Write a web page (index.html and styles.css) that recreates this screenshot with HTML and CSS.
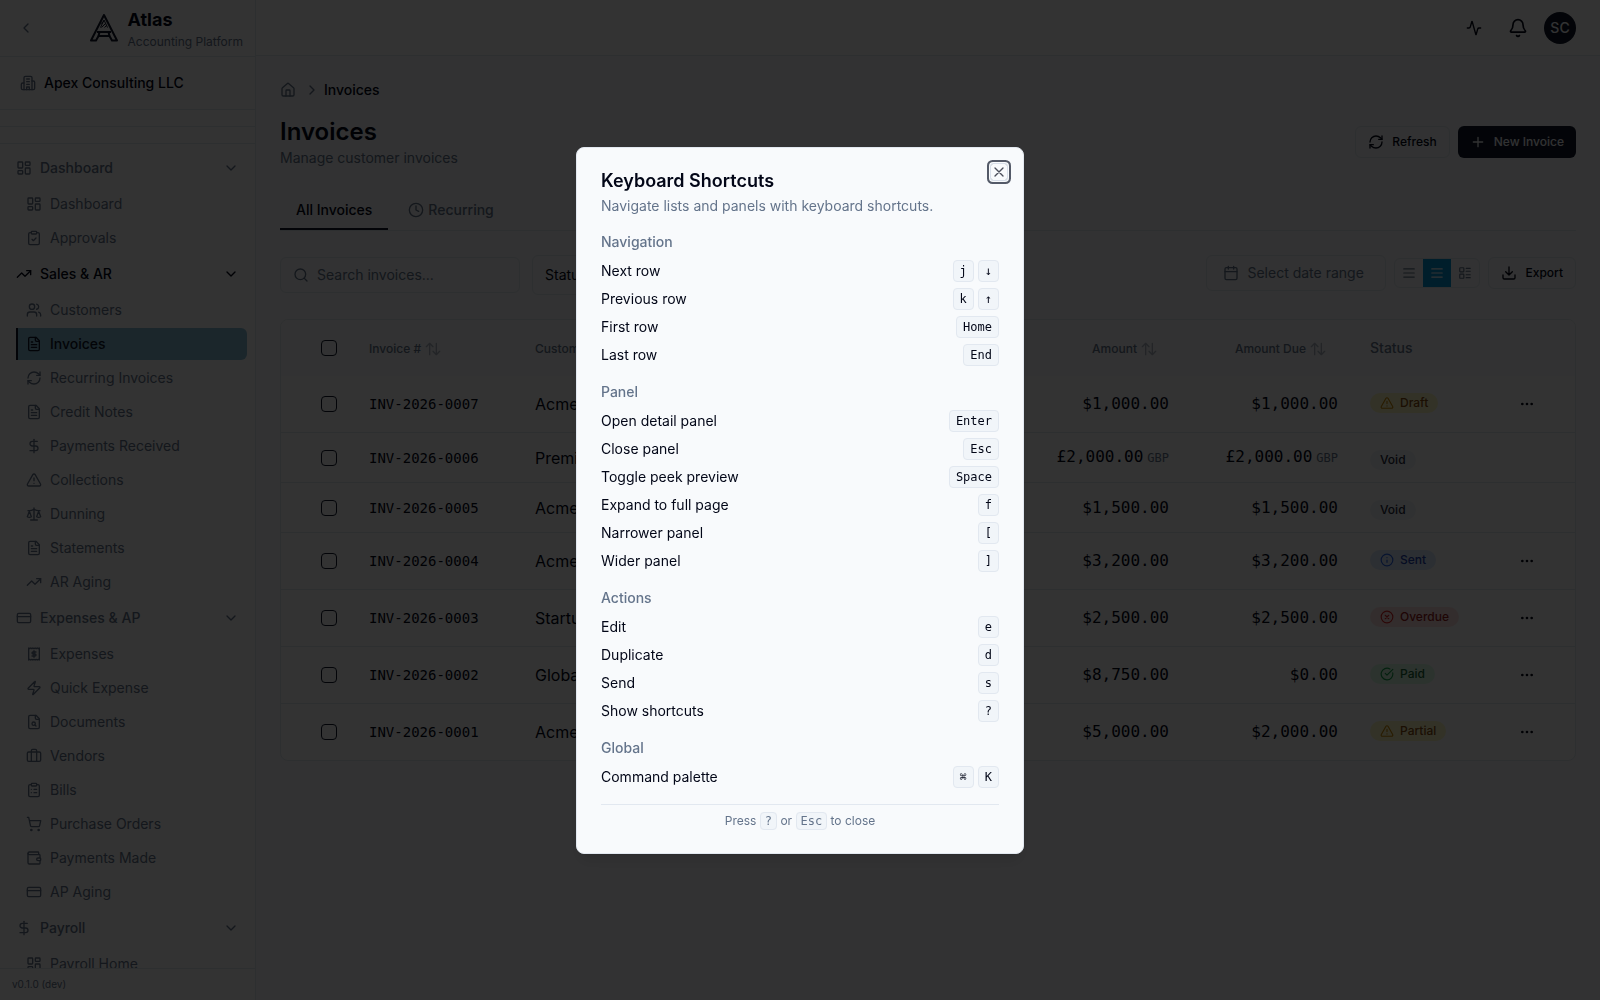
FILE: index.html
```html
<!DOCTYPE html>
<html lang="en">
<head>
<meta charset="utf-8">
<meta name="viewport" content="width=device-width, initial-scale=1">
<title>Invoices – Atlas</title>
<link rel="stylesheet" href="styles.css">
</head>
<body>
<svg class="sprite" aria-hidden="true">
  <symbol id="i-left" viewBox="0 0 24 24"><path d="m15 18-6-6 6-6"/></symbol>
  <symbol id="i-right" viewBox="0 0 24 24"><path d="m9 18 6-6-6-6"/></symbol>
  <symbol id="i-down" viewBox="0 0 24 24"><path d="m6 9 6 6 6-6"/></symbol>
  <symbol id="i-building" viewBox="0 0 24 24"><path d="M6 22V4a2 2 0 0 1 2-2h8a2 2 0 0 1 2 2v18Z"/><path d="M6 12H4a2 2 0 0 0-2 2v6a2 2 0 0 0 2 2h2"/><path d="M18 9h2a2 2 0 0 1 2 2v9a2 2 0 0 1-2 2h-2"/><path d="M10 6h4M10 10h4M10 14h4M10 22v-4h4v4"/></symbol>
  <symbol id="i-dash" viewBox="0 0 24 24"><rect width="7" height="9" x="3" y="3" rx="1"/><rect width="7" height="5" x="14" y="3" rx="1"/><rect width="7" height="9" x="14" y="12" rx="1"/><rect width="7" height="5" x="3" y="16" rx="1"/></symbol>
  <symbol id="i-clipcheck" viewBox="0 0 24 24"><rect width="8" height="4" x="8" y="2" rx="1"/><path d="M16 4h2a2 2 0 0 1 2 2v14a2 2 0 0 1-2 2H6a2 2 0 0 1-2-2V6a2 2 0 0 1 2-2h2"/><path d="m9 14 2 2 4-4"/></symbol>
  <symbol id="i-trend" viewBox="0 0 24 24"><path d="M22 7 13.5 15.500 8.500 10.500 2 17"/><path d="M16 7h6v6"/></symbol>
  <symbol id="i-users" viewBox="0 0 24 24"><path d="M16 21v-2a4 4 0 0 0-4-4H6a4 4 0 0 0-4 4v2"/><circle cx="9" cy="7" r="4"/><path d="M22 21v-2a4 4 0 0 0-3-3.870"/><path d="M16 3.130a4 4 0 0 1 0 7.750"/></symbol>
  <symbol id="i-file" viewBox="0 0 24 24"><path d="M15 2H6a2 2 0 0 0-2 2v16a2 2 0 0 0 2 2h12a2 2 0 0 0 2-2V7Z"/><path d="M14 2v4a2 2 0 0 0 2 2h4"/><path d="M10 9H8M16 13H8M16 17H8"/></symbol>
  <symbol id="i-refresh" viewBox="0 0 24 24"><path d="M3 12a9 9 0 0 1 9-9 9.750 9.750 0 0 1 6.740 2.740L21 8"/><path d="M21 3v5h-5"/><path d="M21 12a9 9 0 0 1-9 9 9.750 9.750 0 0 1-6.740-2.740L3 16"/><path d="M8 16H3v5"/></symbol>
  <symbol id="i-dollar" viewBox="0 0 24 24"><path d="M12 2v20"/><path d="M17 5H9.500a3.500 3.500 0 0 0 0 7h5a3.500 3.500 0 0 1 0 7H6"/></symbol>
  <symbol id="i-alert" viewBox="0 0 24 24"><path d="m21.730 18-8-14a2 2 0 0 0-3.480 0l-8 14A2 2 0 0 0 4 21h16a2 2 0 0 0 1.730-3"/><path d="M12 9v4M12 17h.01"/></symbol>
  <symbol id="i-scale" viewBox="0 0 24 24"><path d="m16 16 3-8 3 8c-.87.65-1.920 1-3 1s-2.130-.35-3-1Z"/><path d="m2 16 3-8 3 8c-.87.65-1.920 1-3 1s-2.130-.35-3-1Z"/><path d="M7 21h10M12 3v18"/><path d="M3 7h2c2 0 5-1 7-2 2 1 5 2 7 2h2"/></symbol>
  <symbol id="i-card" viewBox="0 0 24 24"><rect width="20" height="14" x="2" y="5" rx="2"/><path d="M2 10h20"/></symbol>
  <symbol id="i-receipt" viewBox="0 0 24 24"><path d="M4 3v18l1.500-1 1.500 1 1.700-1 1.600 1 1.700-1 1.700 1 1.600-1 1.700 1 1.500-1 1.500 1V3l-1.500 1L17 3l-1.700 1-1.600-1L12 4l-1.700-1-1.600 1L7 3 5.500 4Z"/><path d="M15 9h-4.500a1.500 1.500 0 0 0 0 3h3a1.500 1.500 0 0 1 0 3H9M12 7v10"/></symbol>
  <symbol id="i-zap" viewBox="0 0 24 24"><path d="M4 14a1 1 0 0 1-.78-1.630l9.900-10.200a.5.5 0 0 1 .86.460l-1.920 6.020A1 1 0 0 0 13 10h7a1 1 0 0 1 .78 1.630l-9.900 10.200a.5.5 0 0 1-.86-.46l1.920-6.020A1 1 0 0 0 11 14z"/></symbol>
  <symbol id="i-filesearch" viewBox="0 0 24 24"><path d="M15 2H6a2 2 0 0 0-2 2v16a2 2 0 0 0 2 2h12a2 2 0 0 0 2-2V7Z"/><path d="M14 2v4a2 2 0 0 0 2 2h4"/><circle cx="11.500" cy="14.500" r="2.500"/><path d="M13.300 16.300 15 18"/></symbol>
  <symbol id="i-case" viewBox="0 0 24 24"><rect width="20" height="14" x="2" y="6" rx="2"/><path d="M16 20V4a2 2 0 0 0-2-2h-4a2 2 0 0 0-2 2v16"/></symbol>
  <symbol id="i-cliplist" viewBox="0 0 24 24"><rect width="8" height="4" x="8" y="2" rx="1"/><path d="M16 4h2a2 2 0 0 1 2 2v14a2 2 0 0 1-2 2H6a2 2 0 0 1-2-2V6a2 2 0 0 1 2-2h2"/><path d="M12 11h4M12 16h4M8 11h.01M8 16h.01"/></symbol>
  <symbol id="i-cart" viewBox="0 0 24 24"><circle cx="8" cy="21" r="1"/><circle cx="19" cy="21" r="1"/><path d="M2.050 2.050h2l2.660 12.420a2 2 0 0 0 2 1.580h9.780a2 2 0 0 0 1.950-1.570l1.650-7.430H5.120"/></symbol>
  <symbol id="i-wallet" viewBox="0 0 24 24"><path d="M19 7V4a1 1 0 0 0-1-1H5a2 2 0 0 0 0 4h15a1 1 0 0 1 1 1v4h-3a2 2 0 0 0 0 4h3a1 1 0 0 0 1-1v-2a1 1 0 0 0-1-1"/><path d="M3 5v14a2 2 0 0 0 2 2h15a1 1 0 0 0 1-1v-4"/></symbol>
  <symbol id="i-home" viewBox="0 0 24 24"><path d="M15 21v-8a1 1 0 0 0-1-1h-4a1 1 0 0 0-1 1v8"/><path d="M3 10a2 2 0 0 1 .71-1.530l7-6a2 2 0 0 1 2.580 0l7 6A2 2 0 0 1 21 10v9a2 2 0 0 1-2 2H5a2 2 0 0 1-2-2z"/></symbol>
  <symbol id="i-clock" viewBox="0 0 24 24"><circle cx="12" cy="12" r="10"/><path d="M12 6v6l4 2"/></symbol>
  <symbol id="i-search" viewBox="0 0 24 24"><circle cx="11" cy="11" r="8"/><path d="m21 21-4.300-4.300"/></symbol>
  <symbol id="i-sort" viewBox="0 0 24 24"><path d="M2 8.500 7 3.500l5 5M7 3.500v17M22 15.500l-5 5-5-5M17 20.500v-17"/></symbol>
  <symbol id="i-plus" viewBox="0 0 24 24"><path d="M5 12h14M12 5v14"/></symbol>
  <symbol id="i-calendar" viewBox="0 0 24 24"><path d="M8 2v4M16 2v4"/><rect width="18" height="18" x="3" y="4" rx="2"/><path d="M3 10h18"/></symbol>
  <symbol id="i-rows" viewBox="0 0 24 24"><path d="M3 5h18M3 12h18M3 19h18"/></symbol>
  <symbol id="i-layout" viewBox="0 0 24 24"><rect width="7" height="7" x="3" y="3" rx="1"/><rect width="7" height="7" x="3" y="14" rx="1"/><path d="M14 4h7M14 9h7M14 15h7M14 20h7"/></symbol>
  <symbol id="i-download" viewBox="0 0 24 24"><path d="M21 15v4a2 2 0 0 1-2 2H5a2 2 0 0 1-2-2v-4"/><path d="m7 10 5 5 5-5M12 15V3"/></symbol>
  <symbol id="i-activity" viewBox="0 0 24 24"><path d="M22 12h-2.480a2 2 0 0 0-1.930 1.460l-2.350 8.360a.25.25 0 0 1-.48 0L9.240 2.180a.25.25 0 0 0-.48 0l-2.350 8.360A2 2 0 0 1 4.490 12H2"/></symbol>
  <symbol id="i-bell" viewBox="0 0 24 24"><path d="M10.270 21a2 2 0 0 0 3.460 0"/><path d="M3.260 15.330A1 1 0 0 0 4 17h16a1 1 0 0 0 .74-1.670C19.410 13.960 18 12.500 18 8A6 6 0 0 0 6 8c0 4.500-1.410 5.960-2.740 7.330"/></symbol>
  <symbol id="i-dots" viewBox="0 0 24 24"><circle cx="12" cy="12" r="1"/><circle cx="19" cy="12" r="1"/><circle cx="5" cy="12" r="1"/></symbol>
  <symbol id="i-info" viewBox="0 0 24 24"><circle cx="12" cy="12" r="10"/><path d="M12 16v-4M12 8h.01"/></symbol>
  <symbol id="i-xcircle" viewBox="0 0 24 24"><circle cx="12" cy="12" r="10"/><path d="m15 9-6 6M9 9l6 6"/></symbol>
  <symbol id="i-checkcircle" viewBox="0 0 24 24"><path d="M21.800 10A10 10 0 1 1 17 3.340"/><path d="m9 11 3 3L22 4"/></symbol>
  <symbol id="i-x" viewBox="0 0 24 24"><path d="M18 6 6 18M6 6l12 12"/></symbol>
</svg>

<div class="app">
  <aside class="sidebar">
    <div class="brand-row">
      <button class="icon-button" aria-label="Collapse sidebar"><svg class="icon"><use href="#i-left"/></svg></button>
      <a class="brand" href="#">
        <svg class="logo" viewBox="0 0 32 32" aria-hidden="true">
          <path d="M16 3 3 28.500h5L10.500 24h11L24 28.500h5Z"/><path d="M9 20h14M11.500 20 10.500 24M20.500 20l1 4"/><path class="hatch" d="M12.500 15.500 16 8l3.500 7.500M12.500 12l3.500-3M13.500 15.500l4-4M16.500 15.500l2-2"/>
        </svg>
        <span class="brand-text"><strong>Atlas</strong><small>Accounting Platform</small></span>
      </a>
    </div>
    <div class="company"><svg class="icon"><use href="#i-building"/></svg><span>Apex Consulting LLC</span></div>
    <div class="strip"></div>
    <div class="strip"></div>
    <nav class="nav" aria-label="Main">
      <button class="group"><svg class="icon"><use href="#i-dash"/></svg><span>Dashboard</span><svg class="icon"><use href="#i-down"/></svg></button>
      <a class="item" href="#"><svg class="icon"><use href="#i-dash"/></svg>Dashboard</a>
      <a class="item" href="#"><svg class="icon"><use href="#i-clipcheck"/></svg>Approvals</a>
      <button class="group current"><svg class="icon"><use href="#i-trend"/></svg><span>Sales &amp; AR</span><svg class="icon"><use href="#i-down"/></svg></button>
      <a class="item" href="#"><svg class="icon"><use href="#i-users"/></svg>Customers</a>
      <a class="item active" href="#" aria-current="page"><svg class="icon"><use href="#i-file"/></svg>Invoices</a>
      <a class="item" href="#"><svg class="icon"><use href="#i-refresh"/></svg>Recurring Invoices</a>
      <a class="item" href="#"><svg class="icon"><use href="#i-file"/></svg>Credit Notes</a>
      <a class="item" href="#"><svg class="icon"><use href="#i-dollar"/></svg>Payments Received</a>
      <a class="item" href="#"><svg class="icon"><use href="#i-alert"/></svg>Collections</a>
      <a class="item" href="#"><svg class="icon"><use href="#i-scale"/></svg>Dunning</a>
      <a class="item" href="#"><svg class="icon"><use href="#i-file"/></svg>Statements</a>
      <a class="item" href="#"><svg class="icon"><use href="#i-trend"/></svg>AR Aging</a>
      <button class="group"><svg class="icon"><use href="#i-card"/></svg><span>Expenses &amp; AP</span><svg class="icon"><use href="#i-down"/></svg></button>
      <a class="item" href="#"><svg class="icon"><use href="#i-receipt"/></svg>Expenses</a>
      <a class="item" href="#"><svg class="icon"><use href="#i-zap"/></svg>Quick Expense</a>
      <a class="item" href="#"><svg class="icon"><use href="#i-filesearch"/></svg>Documents</a>
      <a class="item" href="#"><svg class="icon"><use href="#i-case"/></svg>Vendors</a>
      <a class="item" href="#"><svg class="icon"><use href="#i-cliplist"/></svg>Bills</a>
      <a class="item" href="#"><svg class="icon"><use href="#i-cart"/></svg>Purchase Orders</a>
      <a class="item" href="#"><svg class="icon"><use href="#i-wallet"/></svg>Payments Made</a>
      <a class="item" href="#"><svg class="icon"><use href="#i-card"/></svg>AP Aging</a>
      <button class="group"><svg class="icon"><use href="#i-dollar"/></svg><span>Payroll</span><svg class="icon"><use href="#i-down"/></svg></button>
      <a class="item" href="#"><svg class="icon"><use href="#i-dash"/></svg>Payroll Home</a>
    </nav>
    <div class="version">v0.1.0 (dev)</div>
  </aside>

  <div class="main">
    <header class="topbar">
      <button class="icon-button" aria-label="Activity"><svg class="icon"><use href="#i-activity"/></svg></button>
      <button class="icon-button" aria-label="Notifications"><svg class="icon large"><use href="#i-bell"/></svg></button>
      <button class="avatar" aria-label="Account">SC</button>
    </header>
    <main class="content">
      <nav class="crumbs" aria-label="Breadcrumb">
        <a href="#" aria-label="Home"><svg class="icon"><use href="#i-home"/></svg></a>
        <svg class="icon"><use href="#i-right"/></svg>
        <span>Invoices</span>
      </nav>
      <div class="page-head">
        <div>
          <h1>Invoices</h1>
          <p>Manage customer invoices</p>
        </div>
        <div class="actions">
          <button class="btn"><svg class="icon"><use href="#i-refresh"/></svg>Refresh</button>
          <button class="btn primary"><svg class="icon"><use href="#i-plus"/></svg>New Invoice</button>
        </div>
      </div>
      <div class="tabs" role="tablist">
        <button class="tab selected" role="tab" aria-selected="true">All Invoices</button>
        <button class="tab" role="tab" aria-selected="false"><svg class="icon"><use href="#i-clock"/></svg>Recurring</button>
      </div>
      <div class="filters">
        <label class="search"><svg class="icon"><use href="#i-search"/></svg><input type="text" placeholder="Search invoices..." aria-label="Search invoices"></label>
        <select class="status-select" aria-label="Status"><option>Status</option></select>
        <div class="tools">
          <button class="date"><svg class="icon"><use href="#i-calendar"/></svg>Select date range</button>
          <div class="density">
            <button aria-label="Compact rows"><svg class="icon small"><use href="#i-rows"/></svg></button>
            <button class="on" aria-label="Normal rows"><svg class="icon small"><use href="#i-rows"/></svg></button>
            <button aria-label="Detailed rows"><svg class="icon small"><use href="#i-layout"/></svg></button>
          </div>
          <button class="btn"><svg class="icon"><use href="#i-download"/></svg>Export</button>
        </div>
      </div>
      <div class="table-card">
        <table>
          <colgroup><col class="c-check"><col class="c-num"><col><col class="c-amount"><col class="c-amount"><col class="c-status"><col class="c-menu"></colgroup>
          <thead>
            <tr>
              <th class="check"><input type="checkbox" aria-label="Select all"></th>
              <th><button class="sort">Invoice #<svg class="icon"><use href="#i-sort"/></svg></button></th>
              <th><button class="sort">Customer<svg class="icon"><use href="#i-sort"/></svg></button></th>
              <th class="right"><button class="sort">Amount<svg class="icon"><use href="#i-sort"/></svg></button></th>
              <th class="right"><button class="sort">Amount Due<svg class="icon"><use href="#i-sort"/></svg></button></th>
              <th>Status</th>
              <th></th>
            </tr>
          </thead>
          <tbody>
            <tr><td class="check"><input type="checkbox" aria-label="Select INV-2026-0007"></td><td class="num">INV-2026-0007</td><td>Acme Corp</td><td class="money">$1,000.00</td><td class="money">$1,000.00</td><td><span class="badge yellow"><svg class="icon small"><use href="#i-alert"/></svg>Draft</span></td><td><button class="more" aria-label="Row actions"><svg class="icon"><use href="#i-dots"/></svg></button></td></tr>
            <tr class="short"><td class="check"><input type="checkbox" aria-label="Select INV-2026-0006"></td><td class="num">INV-2026-0006</td><td>Premium Ltd</td><td class="money">£2,000.00<small>GBP</small></td><td class="money">£2,000.00<small>GBP</small></td><td><span class="badge">Void</span></td><td></td></tr>
            <tr class="short"><td class="check"><input type="checkbox" aria-label="Select INV-2026-0005"></td><td class="num">INV-2026-0005</td><td>Acme Corp</td><td class="money">$1,500.00</td><td class="money">$1,500.00</td><td><span class="badge">Void</span></td><td></td></tr>
            <tr><td class="check"><input type="checkbox" aria-label="Select INV-2026-0004"></td><td class="num">INV-2026-0004</td><td>Acme Corp</td><td class="money">$3,200.00</td><td class="money">$3,200.00</td><td><span class="badge blue"><svg class="icon small"><use href="#i-info"/></svg>Sent</span></td><td><button class="more" aria-label="Row actions"><svg class="icon"><use href="#i-dots"/></svg></button></td></tr>
            <tr><td class="check"><input type="checkbox" aria-label="Select INV-2026-0003"></td><td class="num">INV-2026-0003</td><td>Startup Inc</td><td class="money">$2,500.00</td><td class="money">$2,500.00</td><td><span class="badge red"><svg class="icon small"><use href="#i-xcircle"/></svg>Overdue</span></td><td><button class="more" aria-label="Row actions"><svg class="icon"><use href="#i-dots"/></svg></button></td></tr>
            <tr><td class="check"><input type="checkbox" aria-label="Select INV-2026-0002"></td><td class="num">INV-2026-0002</td><td>Global Inc</td><td class="money">$8,750.00</td><td class="money">$0.00</td><td><span class="badge green"><svg class="icon small"><use href="#i-checkcircle"/></svg>Paid</span></td><td><button class="more" aria-label="Row actions"><svg class="icon"><use href="#i-dots"/></svg></button></td></tr>
            <tr><td class="check"><input type="checkbox" aria-label="Select INV-2026-0001"></td><td class="num">INV-2026-0001</td><td>Acme Corp</td><td class="money">$5,000.00</td><td class="money">$2,000.00</td><td><span class="badge yellow"><svg class="icon small"><use href="#i-alert"/></svg>Partial</span></td><td><button class="more" aria-label="Row actions"><svg class="icon"><use href="#i-dots"/></svg></button></td></tr>
          </tbody>
        </table>
      </div>
    </main>
  </div>
</div>

<div class="overlay">
  <section class="dialog" role="dialog" aria-modal="true" aria-labelledby="dialog-title">
    <button class="close" aria-label="Close"><svg class="icon"><use href="#i-x"/></svg></button>
    <header class="dialog-head">
      <h2 id="dialog-title">Keyboard Shortcuts</h2>
      <p>Navigate lists and panels with keyboard shortcuts.</p>
    </header>
    <div class="keys">
      <h3>Navigation</h3>
      <ul>
        <li>Next row<span><kbd>j</kbd><kbd>↓</kbd></span></li>
        <li>Previous row<span><kbd>k</kbd><kbd>↑</kbd></span></li>
        <li>First row<span><kbd>Home</kbd></span></li>
        <li>Last row<span><kbd>End</kbd></span></li>
      </ul>
    </div>
    <div class="keys">
      <h3>Panel</h3>
      <ul>
        <li>Open detail panel<span><kbd>Enter</kbd></span></li>
        <li>Close panel<span><kbd>Esc</kbd></span></li>
        <li>Toggle peek preview<span><kbd>Space</kbd></span></li>
        <li>Expand to full page<span><kbd>f</kbd></span></li>
        <li>Narrower panel<span><kbd>[</kbd></span></li>
        <li>Wider panel<span><kbd>]</kbd></span></li>
      </ul>
    </div>
    <div class="keys">
      <h3>Actions</h3>
      <ul>
        <li>Edit<span><kbd>e</kbd></span></li>
        <li>Duplicate<span><kbd>d</kbd></span></li>
        <li>Send<span><kbd>s</kbd></span></li>
        <li>Show shortcuts<span><kbd>?</kbd></span></li>
      </ul>
    </div>
    <div class="keys">
      <h3>Global</h3>
      <ul>
        <li>Command palette<span><kbd>⌘</kbd><kbd>K</kbd></span></li>
      </ul>
    </div>
    <footer class="dialog-foot">Press <kbd>?</kbd> or <kbd>Esc</kbd> to close</footer>
  </section>
</div>
</body>
</html>
```

FILE: styles.css
```css
:root {
  --bg: #f8fafc;
  --panel: #ffffff;
  --ink: #020617;
  --primary: #0f172a;
  --muted: #64748b;
  --line: #e2e8f0;
  --soft: #f1f5f9;
  --sans: Inter, "Noto Sans", sans-serif;
  --mono: "DejaVu Sans Mono", monospace;
}

*, *::before, *::after { box-sizing: border-box; }

body {
  margin: 0;
  font: 400 14px/20px var(--sans);
  color: var(--ink);
  background: var(--bg);
}

h1, h2, h3, p, ul { margin: 0; padding: 0; }
ul { list-style: none; }
a { color: inherit; text-decoration: none; }
button, input, select { font: inherit; color: inherit; margin: 0; }
button { border: 0; padding: 0; background: none; cursor: pointer; }

.sprite { display: none; }

.icon {
  width: 16px;
  height: 16px;
  flex: none;
  fill: none;
  stroke: currentColor;
  stroke-width: 2;
  stroke-linecap: round;
  stroke-linejoin: round;
}
.icon.small { width: 14px; height: 14px; }
.icon.large { width: 20px; height: 20px; }

.app { display: flex; height: 100vh; overflow: hidden; }

/* Sidebar */
.sidebar {
  display: flex;
  flex-direction: column;
  flex: none;
  width: 256px;
  background: var(--panel);
  border-right: 1px solid var(--line);
}
.brand-row {
  display: flex;
  align-items: center;
  justify-content: space-between;
  height: 57px;
  flex: none;
  padding: 0 12px 0 8px;
  border-bottom: 1px solid var(--line);
}
.icon-button {
  display: inline-flex;
  align-items: center;
  justify-content: center;
  width: 36px;
  height: 36px;
}
.brand-row .icon-button { color: var(--muted); }
.brand { display: flex; align-items: center; gap: 8px; }
.logo { width: 32px; height: 32px; fill: none; stroke: var(--primary); stroke-width: 2; stroke-linejoin: round; }
.logo .hatch { stroke-width: 1; }
.brand-text { display: flex; flex-direction: column; }
.brand-text strong { font-size: 18px; line-height: 28px; font-weight: 700; }
.brand-text small { font-size: 12px; line-height: 16px; color: var(--muted); }
.company {
  display: flex;
  align-items: center;
  gap: 8px;
  flex: none;
  height: 53px;
  padding: 0 20px;
  font-weight: 500;
  border-bottom: 1px solid var(--line);
}
.company .icon { color: var(--muted); }
.strip { flex: none; height: 17px; border-bottom: 1px solid var(--line); }
.nav {
  display: flex;
  flex-direction: column;
  gap: 2px;
  flex: 1;
  min-height: 0;
  overflow: hidden;
  padding: 6px 8px;
  color: var(--muted);
}
.group {
  display: flex;
  align-items: center;
  gap: 8px;
  flex: none;
  height: 36px;
  padding: 0 8px;
  font-weight: 500;
  text-align: left;
}
.group span { flex: 1; }
.group.current { color: var(--ink); }
.item {
  display: flex;
  align-items: center;
  gap: 8px;
  flex: none;
  height: 32px;
  margin-left: 8px;
  padding: 0 8px;
  border-left: 2px solid transparent;
  border-radius: 0 6px 6px 0;
}
.item.active {
  color: var(--primary);
  background: #87bed7;
  border-left-color: var(--primary);
  font-weight: 500;
}
.version {
  flex: none;
  padding: 8px 12px;
  font-size: 10px;
  line-height: 15px;
  color: var(--muted);
  border-top: 1px solid var(--line);
}

/* Main column */
.main { display: flex; flex-direction: column; flex: 1; min-width: 0; }
.topbar {
  display: flex;
  align-items: center;
  justify-content: flex-end;
  gap: 8px;
  flex: none;
  height: 56px;
  padding: 0 24px;
  background: var(--panel);
  border-bottom: 1px solid var(--line);
}
.avatar {
  width: 32px;
  height: 32px;
  border-radius: 50%;
  background: var(--primary);
  color: var(--bg);
  font-weight: 500;
}
.content { flex: 1; padding: 24px; }
.crumbs { display: flex; align-items: center; height: 20px; margin-bottom: 16px; font-weight: 500; }
.crumbs a { display: flex; margin-right: 8px; color: var(--muted); }
.crumbs > .icon { margin-right: 4px; color: var(--muted); }
.page-head { display: flex; align-items: center; justify-content: space-between; margin-bottom: 24px; }
.page-head h1 { font-size: 24px; line-height: 32px; font-weight: 600; }
.page-head p { color: var(--muted); }
.actions { display: flex; gap: 8px; }
.btn {
  display: inline-flex;
  align-items: center;
  gap: 8px;
  height: 32px;
  padding: 0 12px;
  border: 1px solid var(--line);
  border-radius: 6px;
  font-size: 12px;
  font-weight: 500;
}
.btn.primary { background: var(--primary); border: 0; color: var(--bg); }
.tabs { display: flex; gap: 4px; margin-bottom: 24px; border-bottom: 1px solid var(--line); }
.tab {
  display: inline-flex;
  align-items: center;
  gap: 4px;
  height: 38px;
  padding: 0 16px;
  border-bottom: 2px solid transparent;
  font-weight: 500;
  color: var(--muted);
}
.tab.selected { color: var(--ink); border-bottom-color: var(--primary); }

.filters { display: flex; align-items: center; gap: 12px; height: 40px; margin-bottom: 24px; }
.search {
  display: flex;
  align-items: center;
  gap: 8px;
  width: 240px;
  height: 36px;
  padding: 0 12px;
  border: 1px solid var(--line);
  border-radius: 6px;
  color: var(--muted);
}
.search input { flex: 1; min-width: 0; border: 0; padding: 0; background: none; outline: 0; }
.search input::placeholder { color: var(--muted); opacity: 1; }
.status-select {
  width: 160px;
  height: 40px;
  padding: 0 12px;
  border: 1px solid var(--line);
  border-radius: 6px;
  background: none;
  appearance: none;
}
.tools { display: flex; align-items: center; align-self: flex-start; gap: 8px; margin-left: auto; }
.date {
  display: inline-flex;
  align-items: center;
  gap: 8px;
  width: 180px;
  height: 36px;
  padding: 0 16px;
  border: 1px solid var(--line);
  border-radius: 6px;
  color: var(--muted);
}
.density {
  display: flex;
  height: 30px;
  border: 1px solid var(--line);
  border-radius: 6px;
  overflow: hidden;
  color: var(--muted);
}
.density button { display: flex; align-items: center; justify-content: center; width: 28px; }
.density .on { background: #0094d4; color: var(--bg); }

/* Table */
.table-card { border: 1px solid var(--line); border-radius: 8px; background: var(--panel); overflow: hidden; }
table { width: 100%; table-layout: fixed; border-collapse: separate; border-spacing: 0; }
.c-check { width: 72px; }
.c-num { width: 166px; }
.c-amount { width: 169px; }
.c-status { width: 141px; }
.c-menu { width: 80px; }
th { height: 56px; padding: 0 16px; text-align: left; font-weight: 500; color: var(--muted); background: var(--bg); }
td { height: 57px; padding: 0 16px; font-size: 16px; line-height: 24px; white-space: nowrap; border-bottom: 1px solid var(--line); }
.short td { height: 50px; }
tbody tr:last-child td { height: 56px; border-bottom: 0; }
.check { padding: 0 0 0 40px; }
.check input {
  display: block;
  appearance: none;
  width: 16px;
  height: 16px;
  border: 1px solid var(--primary);
  border-radius: 4px;
}
.sort { display: inline-flex; align-items: center; gap: 4px; font-size: 12px; font-weight: 500; }
.sort .icon { opacity: 0.5; }
.right { text-align: right; padding-right: 28px; }
.num { font-family: var(--mono); font-size: 14px; }
.money { font-family: var(--mono); text-align: right; }
.money small { margin-left: 4px; font-size: 12px; color: var(--muted); }
.badge {
  display: inline-flex;
  align-items: center;
  gap: 6px;
  height: 20px;
  padding: 0 10px;
  border-radius: 10px;
  font-size: 12px;
  line-height: 16px;
  font-weight: 500;
  background: var(--soft);
  color: #1e293b;
}
.badge.yellow { background: #fef9c3; color: #854d0e; }
.badge.blue { background: #dbeafe; color: #1e40af; }
.badge.red { background: #fee2e2; color: #991b1b; }
.badge.green { background: #dcfce7; color: #166534; }
.badge.yellow .icon { color: #ca8a04; }
.badge.blue .icon { color: #2563eb; }
.badge.red .icon { color: #dc2626; }
.badge.green .icon { color: #16a34a; }
.more { display: flex; align-items: center; justify-content: center; width: 32px; height: 32px; }

/* Dialog */
.overlay {
  position: fixed;
  inset: 0;
  display: flex;
  align-items: center;
  justify-content: center;
  background: rgba(0, 0, 0, 0.8);
}
.dialog {
  position: relative;
  display: flex;
  flex-direction: column;
  gap: 16px;
  width: 448px;
  padding: 24px;
  border: 1px solid var(--line);
  border-radius: 8px;
  background: var(--bg);
  box-shadow: 0 10px 15px -3px rgba(0, 0, 0, 0.1), 0 4px 6px -4px rgba(0, 0, 0, 0.1);
}
.close {
  position: absolute;
  top: 16px;
  right: 16px;
  display: flex;
  border-radius: 2px;
  opacity: 0.7;
  outline: 1px solid #cbd5e1;
  box-shadow: 0 0 0 2px var(--bg), 0 0 0 4px var(--primary);
}
.dialog-head { display: flex; flex-direction: column; gap: 6px; }
.dialog-head h2 { font-size: 18px; line-height: 18px; font-weight: 600; }
.dialog-head p { color: var(--muted); }
.keys h3 { margin-bottom: 8px; font-size: 14px; line-height: 20px; font-weight: 500; color: var(--muted); }
.keys ul { display: flex; flex-direction: column; gap: 6px; }
.keys li { display: flex; align-items: center; justify-content: space-between; height: 22px; }
.keys li span { display: flex; gap: 4px; }
kbd {
  padding: 2px 6px;
  border: 1px solid var(--line);
  border-radius: 4px;
  background: var(--soft);
  font: 400 12px/16px var(--mono);
}
.dialog-foot {
  padding-top: 8px;
  border-top: 1px solid var(--line);
  font-size: 12px;
  line-height: 16px;
  text-align: center;
  color: var(--muted);
}
.dialog-foot kbd { padding: 1px 4px; }
```
